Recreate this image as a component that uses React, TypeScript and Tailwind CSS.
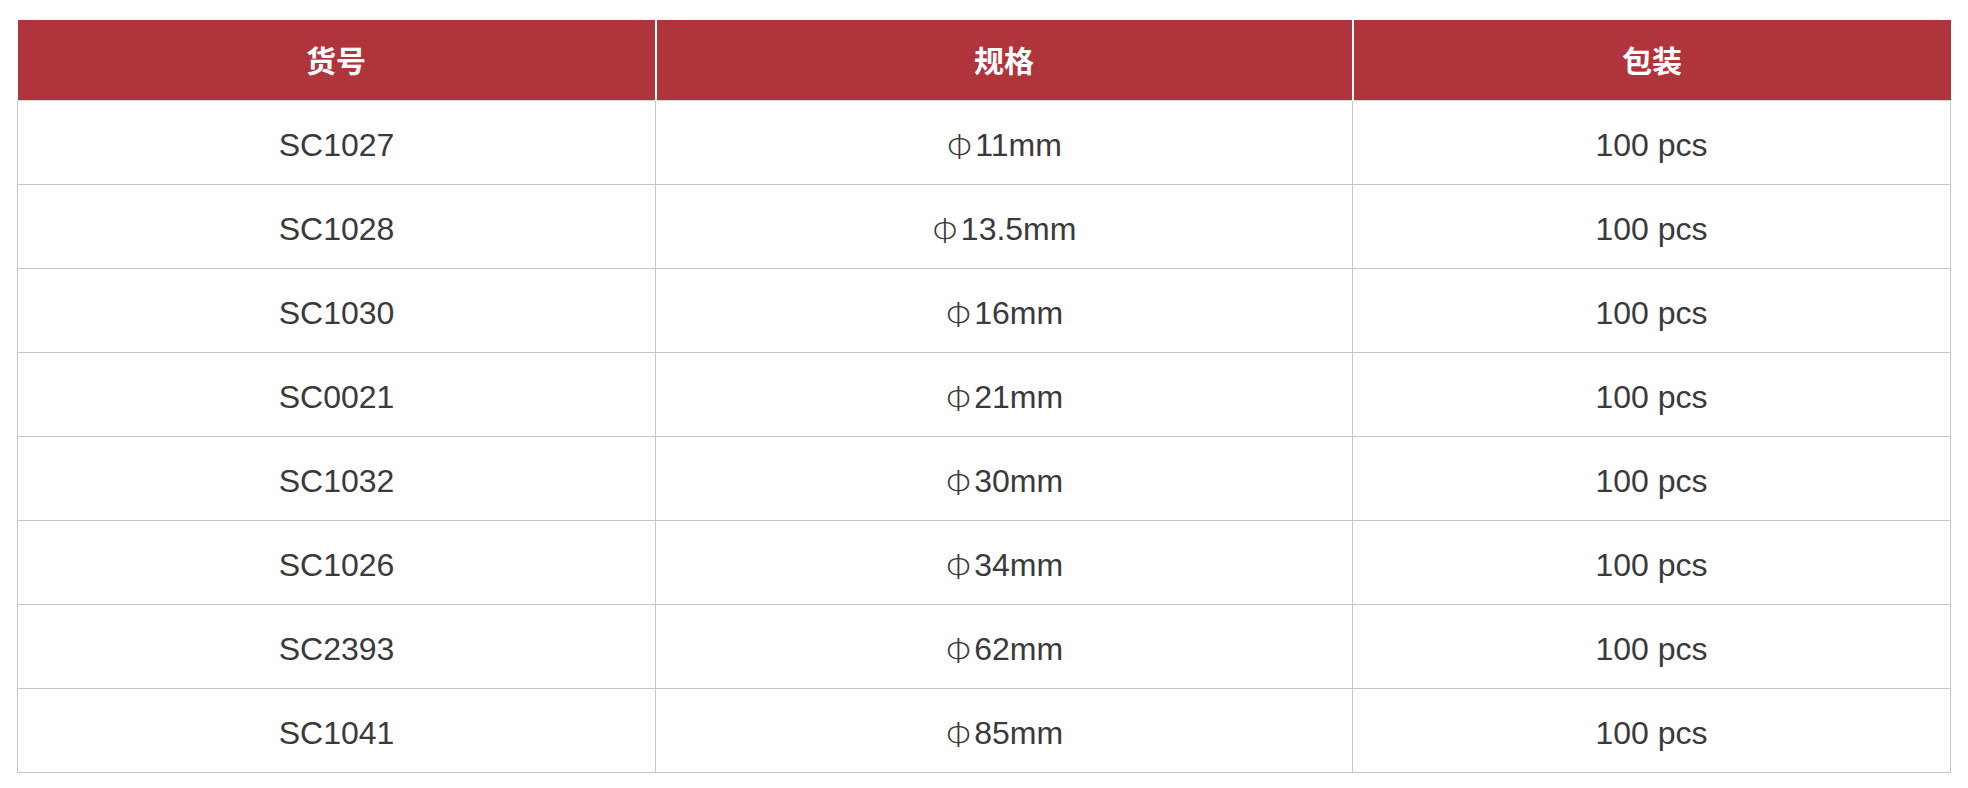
const rows: Array<[string, string]> = [
  ["SC1027", "11mm"],
  ["SC1028", "13.5mm"],
  ["SC1030", "16mm"],
  ["SC0021", "21mm"],
  ["SC1032", "30mm"],
  ["SC1026", "34mm"],
  ["SC2393", "62mm"],
  ["SC1041", "85mm"],
];

export default function App() {
  return (
    <div className="min-h-[788px] w-[1968px] bg-white pl-[17px] pt-[20px]">
      <table className="w-[1933px] table-fixed border-collapse font-['Liberation_Sans','Noto_Sans_CJK_SC',sans-serif]">
        <colgroup>
          <col className="w-[638px]" />
          <col className="w-[697px]" />
          <col className="w-[598px]" />
        </colgroup>
        <thead>
          <tr className="h-[80px] bg-[#b0343b] text-[30px] font-bold text-white">
            <th className="border-r-2 border-b border-r-white border-b-[#d6d6d6] font-['Noto_Sans_CJK_SC',sans-serif]">
              货号
            </th>
            <th className="border-r-2 border-b border-r-white border-b-[#d6d6d6] font-['Noto_Sans_CJK_SC',sans-serif]">
              规格
            </th>
            <th className="border-b border-b-[#d6d6d6] font-['Noto_Sans_CJK_SC',sans-serif]">
              包装
            </th>
          </tr>
        </thead>
        <tbody className="text-[32px] text-[#3a3a3a]">
          {rows.map(([code, size]) => (
            <tr key={code} className="h-[84px]">
              <td className="border border-[#c6c6c6] pt-[6px] text-center">{code}</td>
              <td className="border border-[#c6c6c6] pt-[6px] text-center">
                <span className="align-[-3px] font-['DejaVu_Sans',sans-serif] text-[34px] leading-none font-extralight">Φ</span>
                {size}
              </td>
              <td className="border border-[#c6c6c6] pt-[6px] text-center">100 pcs</td>
            </tr>
          ))}
        </tbody>
      </table>
    </div>
  );
}
